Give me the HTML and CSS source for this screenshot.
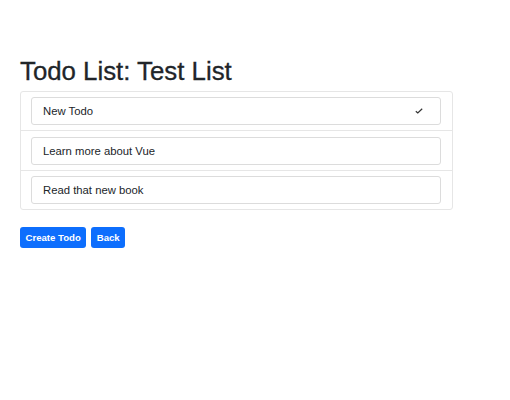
FILE: index.html
```html
<!DOCTYPE html>
<html>
<head>
<meta charset="utf-8">
<link rel="stylesheet" href="styles.css">
</head>
<body>
<div class="page">
  <h2 class="title">Todo List: Test List</h2>
  <ul class="list">
    <li class="item">
      <div class="field">
        <span class="field-text">New Todo</span>
        <svg class="check" width="8" height="6" viewBox="0 0 8 6"><path d="M0.8 3.2 L2.8 5 L7.2 0.8" fill="none" stroke="#333" stroke-width="1.2"/></svg>
      </div>
    </li>
    <li class="item item-mid">
      <div class="field"><span class="field-text">Learn more about Vue</span></div>
    </li>
    <li class="item">
      <div class="field"><span class="field-text">Read that new book</span></div>
    </li>
  </ul>
  <div class="actions">
    <button class="btn">Create Todo</button>
    <button class="btn">Back</button>
  </div>
</div>
</body>
</html>
```
FILE: styles.css
```css
html, body {
  margin: 0;
  padding: 0;
  background: #fff;
}
body {
  font-family: "Liberation Sans", Arial, sans-serif;
  color: #212529;
}
.page {
  width: 433px;
  padding: 56px 0 0 20px;
}
.title {
  margin: 0 0 4px 0;
  font-size: 25.8px;
  line-height: 1.2;
  font-weight: 400;
  color: #212529;
  -webkit-text-stroke: 0.3px #212529;
}
.list {
  list-style: none;
  margin: 0;
  padding: 0;
  border: 1px solid #e6e6e6;
  border-radius: 3px;
}
.item {
  padding: 5px 11px 5px 10px;
  border-top: 1px solid #e6e6e6;
}
.item:first-child {
  border-top: none;
}
.item-mid {
  padding-top: 6px;
}
.field {
  height: 28px;
  box-sizing: border-box;
  border: 1px solid #dcdcdc;
  border-radius: 3px;
  padding: 0 11px;
  display: flex;
  align-items: center;
  justify-content: space-between;
  font-size: 11.3px;
  color: #212529;
}
.check {
  margin-right: 6px;
}
.actions {
  display: flex;
  gap: 5px;
  margin-top: 17px;
}
.btn {
  height: 21px;
  padding: 0 5.5px;
  border: none;
  border-radius: 3px;
  background: #0d6efd;
  color: #fff;
  font-family: "Liberation Sans", Arial, sans-serif;
  font-weight: 700;
  font-size: 9.6px;
}
```
